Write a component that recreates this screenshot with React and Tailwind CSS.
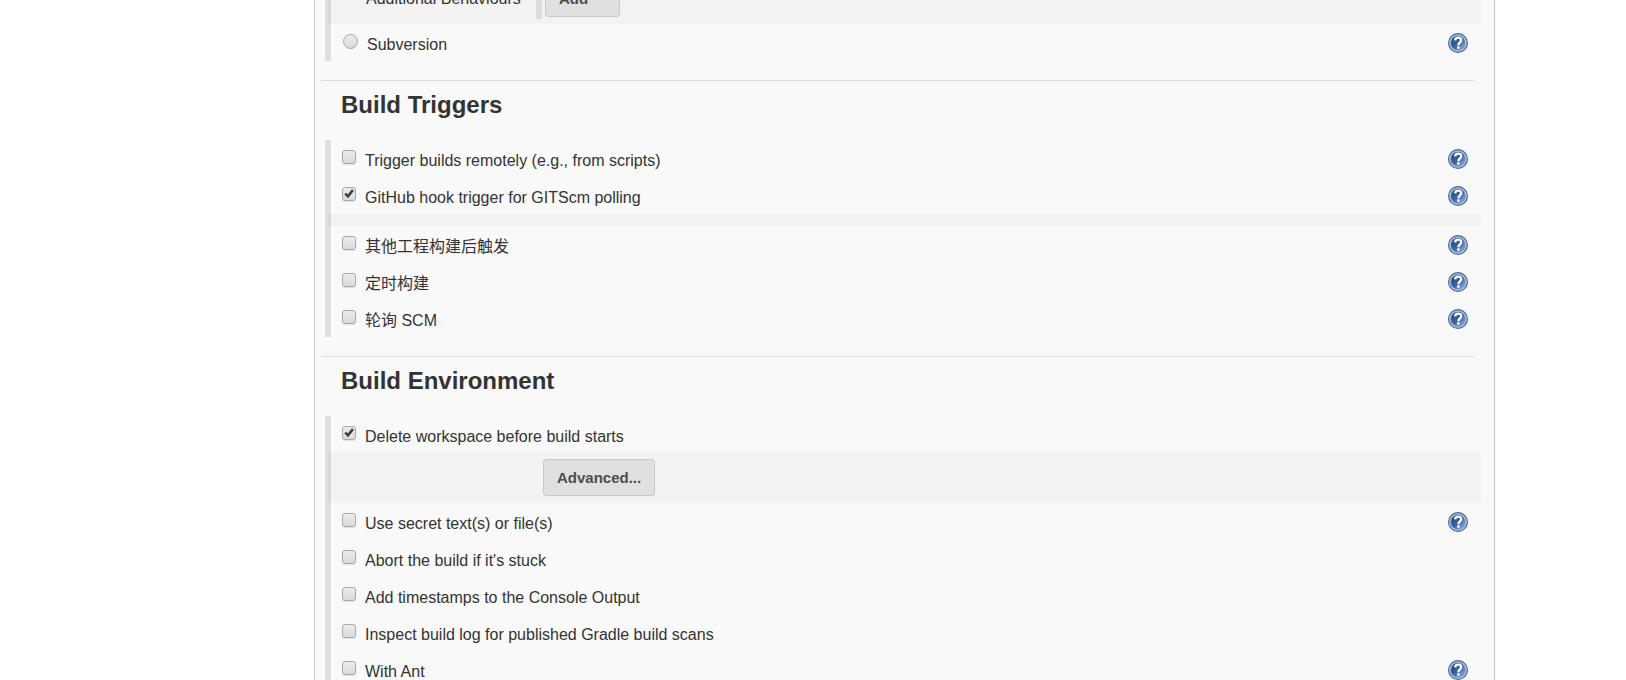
import React from "react";

function HelpLink({ topic }) {
  return (
    <a href="#help" aria-label={`Help for feature: ${topic}`} className="mt-[9px] mr-[13px] block size-5 shrink-0">
      <svg viewBox="0 0 20 20" className="block size-5" aria-hidden="true">
        <defs>
          <linearGradient id="help-fill" x1="0" y1="0" x2="1" y2="1">
            <stop offset="0.15" stopColor="#234a87" />
            <stop offset="0.55" stopColor="#3f68a6" />
            <stop offset="1" stopColor="#9db9e0" />
          </linearGradient>
        </defs>
        <circle cx="10" cy="10" r="10" fill="#3f649f" />
        <circle cx="10" cy="10" r="8.8" fill="#b4c4dd" />
        <circle cx="10" cy="10" r="7.5" fill="#6f8fc0" />
        <circle cx="10" cy="10" r="6.9" fill="url(#help-fill)" />
        <path
          d="M7.1 7.4C7.2 5.5 8.4 4.7 10.1 4.7c1.8 0 3.1 .9 3.1 2.5 0 2.3-2.8 2.2-2.8 5"
          fill="none"
          stroke="#fff"
          strokeWidth="2.3"
        />
        <rect x="9.1" y="13.3" width="2.5" height="2.4" rx="0.4" fill="#fff" />
      </svg>
    </a>
  );
}

function CheckBox({ id, checked }) {
  return (
    <span className="mt-2.5 mr-[9px] ml-[11px] grid size-3.5 shrink-0">
      <input
        id={id}
        type="checkbox"
        defaultChecked={checked}
        className="peer col-start-1 row-start-1 m-0 size-3.5 appearance-none rounded-[3px] border border-[#a8a8a8] bg-linear-to-b from-[#ececec] to-[#dadada] shadow-[0_1px_1px_rgba(0,0,0,0.1)]"
      />
      <svg
        viewBox="0 0 14 14"
        aria-hidden="true"
        className="pointer-events-none invisible col-start-1 row-start-1 size-3.5 peer-checked:visible"
      >
        <path d="M2.3 7.3 4.2 5.8 5.7 7.4 9.9 2.2 12 3.8 6 11.2Z" fill="#3c3c3c" />
      </svg>
    </span>
  );
}

function OptionRow({ id, label, checked, help }) {
  return (
    <div className="flex items-start">
      <CheckBox id={id} checked={checked} />
      <label htmlFor={id} className="grow pt-[9px] pb-1">
        {label}
      </label>
      {help && <HelpLink topic={label} />}
    </div>
  );
}

function Band({ children }) {
  return <div className="-ml-[3px] flex bg-black/[0.027] py-1.5">{children}</div>;
}

function Group({ children }) {
  return <div className="mr-[13px] ml-2.5 border-l-6 border-[#e0e0e0]">{children}</div>;
}

function Section({ title, children }) {
  return (
    <section className="mt-[19px]">
      <hr className="mr-5 ml-1.5 border-t border-[#dcdcdc]" />
      <h2 className="mt-2.5 mb-[21px] ml-[26px] text-2xl leading-7 font-bold">{title}</h2>
      <Group>{children}</Group>
    </section>
  );
}

const buttonClass =
  "h-[37px] rounded-[3px] border border-[#c8c8c8] bg-[#e0e0e0] pl-[13px] text-[15px] font-bold text-[#4d4d4d]";

export default function App() {
  return (
    <div className="h-screen overflow-hidden bg-white font-['Liberation_Sans','Noto_Sans_CJK_SC',sans-serif] text-base leading-6 text-[#333]">
      <main className="-mt-[26px] mr-[131px] ml-[314px] border-x border-[#c8c8c8] bg-[#f9f9f9]">
        <form>
          <Group>
            <Band>
              <div className="flex w-[208px] shrink-0 items-center pl-[38px]">Additional Behaviours</div>
              <div className="-mb-px h-[39px] border-l-6 border-[#dcdcdc] pl-[3px]">
                <button type="button" className={`${buttonClass} pr-[31px]`}>
                  Add
                </button>
              </div>
            </Band>
            <div className="flex items-start">
              <input
                id="scm-subversion"
                type="radio"
                name="scm"
                className="mt-2.5 mr-[9px] ml-3 size-[15px] shrink-0 appearance-none rounded-full border border-[#a8a8a8] bg-linear-to-b from-[#ececec] to-[#dadada]"
              />
              <label htmlFor="scm-subversion" className="grow pt-[9px] pb-1">
                Subversion
              </label>
              <HelpLink topic="Subversion" />
            </div>
          </Group>

          <Section title="Build Triggers">
            <OptionRow id="remote" label="Trigger builds remotely (e.g., from scripts)" help />
            <OptionRow id="github" label="GitHub hook trigger for GITScm polling" checked help />
            <Band />
            <OptionRow id="upstream" label="其他工程构建后触发" help />
            <OptionRow id="timer" label="定时构建" help />
            <OptionRow id="poll" label="轮询 SCM" help />
          </Section>

          <Section title="Build Environment">
            <OptionRow id="clean" label="Delete workspace before build starts" checked />
            <Band>
              <button type="button" className={`${buttonClass} mb-px ml-[215px] pr-[13px]`}>
                Advanced...
              </button>
            </Band>
            <OptionRow id="secret" label="Use secret text(s) or file(s)" help />
            <OptionRow id="abort" label="Abort the build if it's stuck" />
            <OptionRow id="timestamps" label="Add timestamps to the Console Output" />
            <OptionRow id="gradle" label="Inspect build log for published Gradle build scans" />
            <OptionRow id="ant" label="With Ant" help />
          </Section>
        </form>
      </main>
    </div>
  );
}
